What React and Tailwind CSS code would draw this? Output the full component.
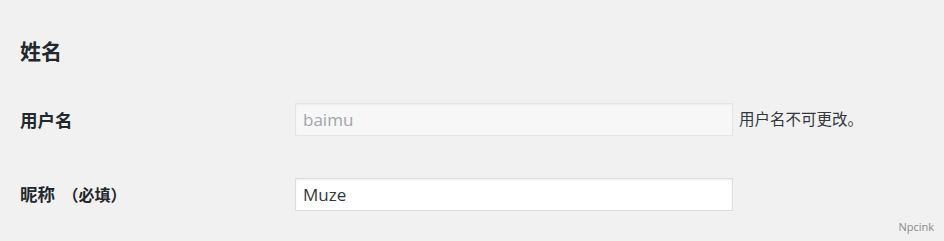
export default function App() {
  return (
    <div
      className="relative h-[241px] w-full overflow-hidden bg-[#f1f1f1] pl-5 text-[#23282d]"
      style={{ fontFamily: '"Segoe UI", "Open Sans", "Noto Sans CJK SC", sans-serif' }}
    >
      <h2 className="pt-[36px] text-[21px] font-bold leading-[30px]">姓名</h2>

      <div className="mt-[37px] flex items-center">
        <div className="w-[275px] text-[17.5px] font-bold leading-6">用户名</div>
        <input
          type="text"
          value="baimu"
          disabled
          readOnly
          className="h-[33px] w-[438px] border border-[#e5e5e5] bg-[#f7f7f7] px-[7px] text-[17px] text-[#a0a5aa] shadow-[inset_0_1px_2px_rgba(0,0,0,0.04)] outline-none"
        />
        <span className="ml-[6px] text-[15.5px] text-[#32373c]">用户名不可更改。</span>
      </div>

      <div className="mt-[42px] flex items-center">
        <div className="w-[275px] text-[17.5px] font-bold leading-6">
          昵称 <span className="ml-[3px] text-[16px]">（必填）</span>
        </div>
        <input
          type="text"
          defaultValue="Muze"
          className="h-[33px] w-[438px] border border-[#dddddd] bg-white px-[7px] text-[17px] text-[#32373c] shadow-[inset_0_1px_2px_rgba(0,0,0,0.07)] outline-none"
        />
      </div>

      <span className="absolute bottom-[6px] right-[10px] text-[11px] text-[#8a8a8a]">Npcink</span>
    </div>
  );
}
